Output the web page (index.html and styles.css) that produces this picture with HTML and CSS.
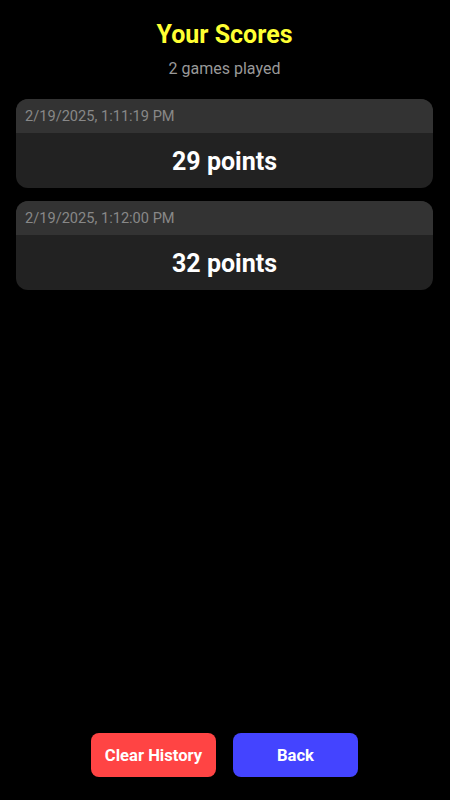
FILE: index.html
```html
<!DOCTYPE html>
<html lang="en">
<head>
  <meta charset="UTF-8" />
  <meta name="viewport" content="width=device-width, initial-scale=1.0" />
  <title>Your Scores</title>
  <link rel="stylesheet" href="styles.css">
</head>
<body>
  <div class="screen">
    <div class="header">
      <h1>Your Scores</h1>
      <p class="count">2 games played</p>
    </div>

    <div class="list">
      <div class="card">
        <div class="card-date">2/19/2025, 1:11:19 PM</div>
        <div class="card-score">29 points</div>
      </div>
      <div class="card">
        <div class="card-date">2/19/2025, 1:12:00 PM</div>
        <div class="card-score">32 points</div>
      </div>
    </div>

    <div class="actions">
      <button class="btn btn-clear">Clear History</button>
      <button class="btn btn-back">Back</button>
    </div>
  </div>
</body>
</html>
```

FILE: styles.css
```css
html, body {
  margin: 0; padding: 0; height: 100%;
  font-family: Roboto, "Noto Sans", sans-serif;
  background: #000;
}
.screen {
  height: 100%;
  display: flex; flex-direction: column;
  padding: 21px 17px 23px 16px;
  box-sizing: border-box;
}
.header {
  text-align: center;
}
h1 {
  margin: 0;
  font-size: 25px;
  line-height: 28px;
  font-weight: 700;
  color: #ffff33;
}
.count {
  margin: 9px 0 0;
  font-size: 16px;
  line-height: 21px;
  color: #999;
}
.list {
  flex: 1;
  display: flex; flex-direction: column;
  gap: 13px;
  margin-top: 20px;
}
.card {
  background: #222;
  border-radius: 12px;
  overflow: hidden;
}
.card-date {
  background: #333;
  padding: 8px 9px;
  font-size: 14.6px;
  line-height: 18px;
  color: #888;
}
.card-score {
  text-align: center;
  font-size: 25px;
  font-weight: 700;
  line-height: 28px;
  color: #fff;
  padding: 15px 0 12px;
}
.actions {
  display: flex; justify-content: center;
  gap: 17px;
}
.btn {
  width: 125px;
  height: 44px;
  border: none;
  border-radius: 8px;
  font-family: inherit;
  font-size: 16.6px;
  font-weight: 700;
  color: #fff;
  cursor: pointer;
}
.btn-clear {
  background: #ff4444;
}
.btn-back {
  background: #4444ff;
}
```
